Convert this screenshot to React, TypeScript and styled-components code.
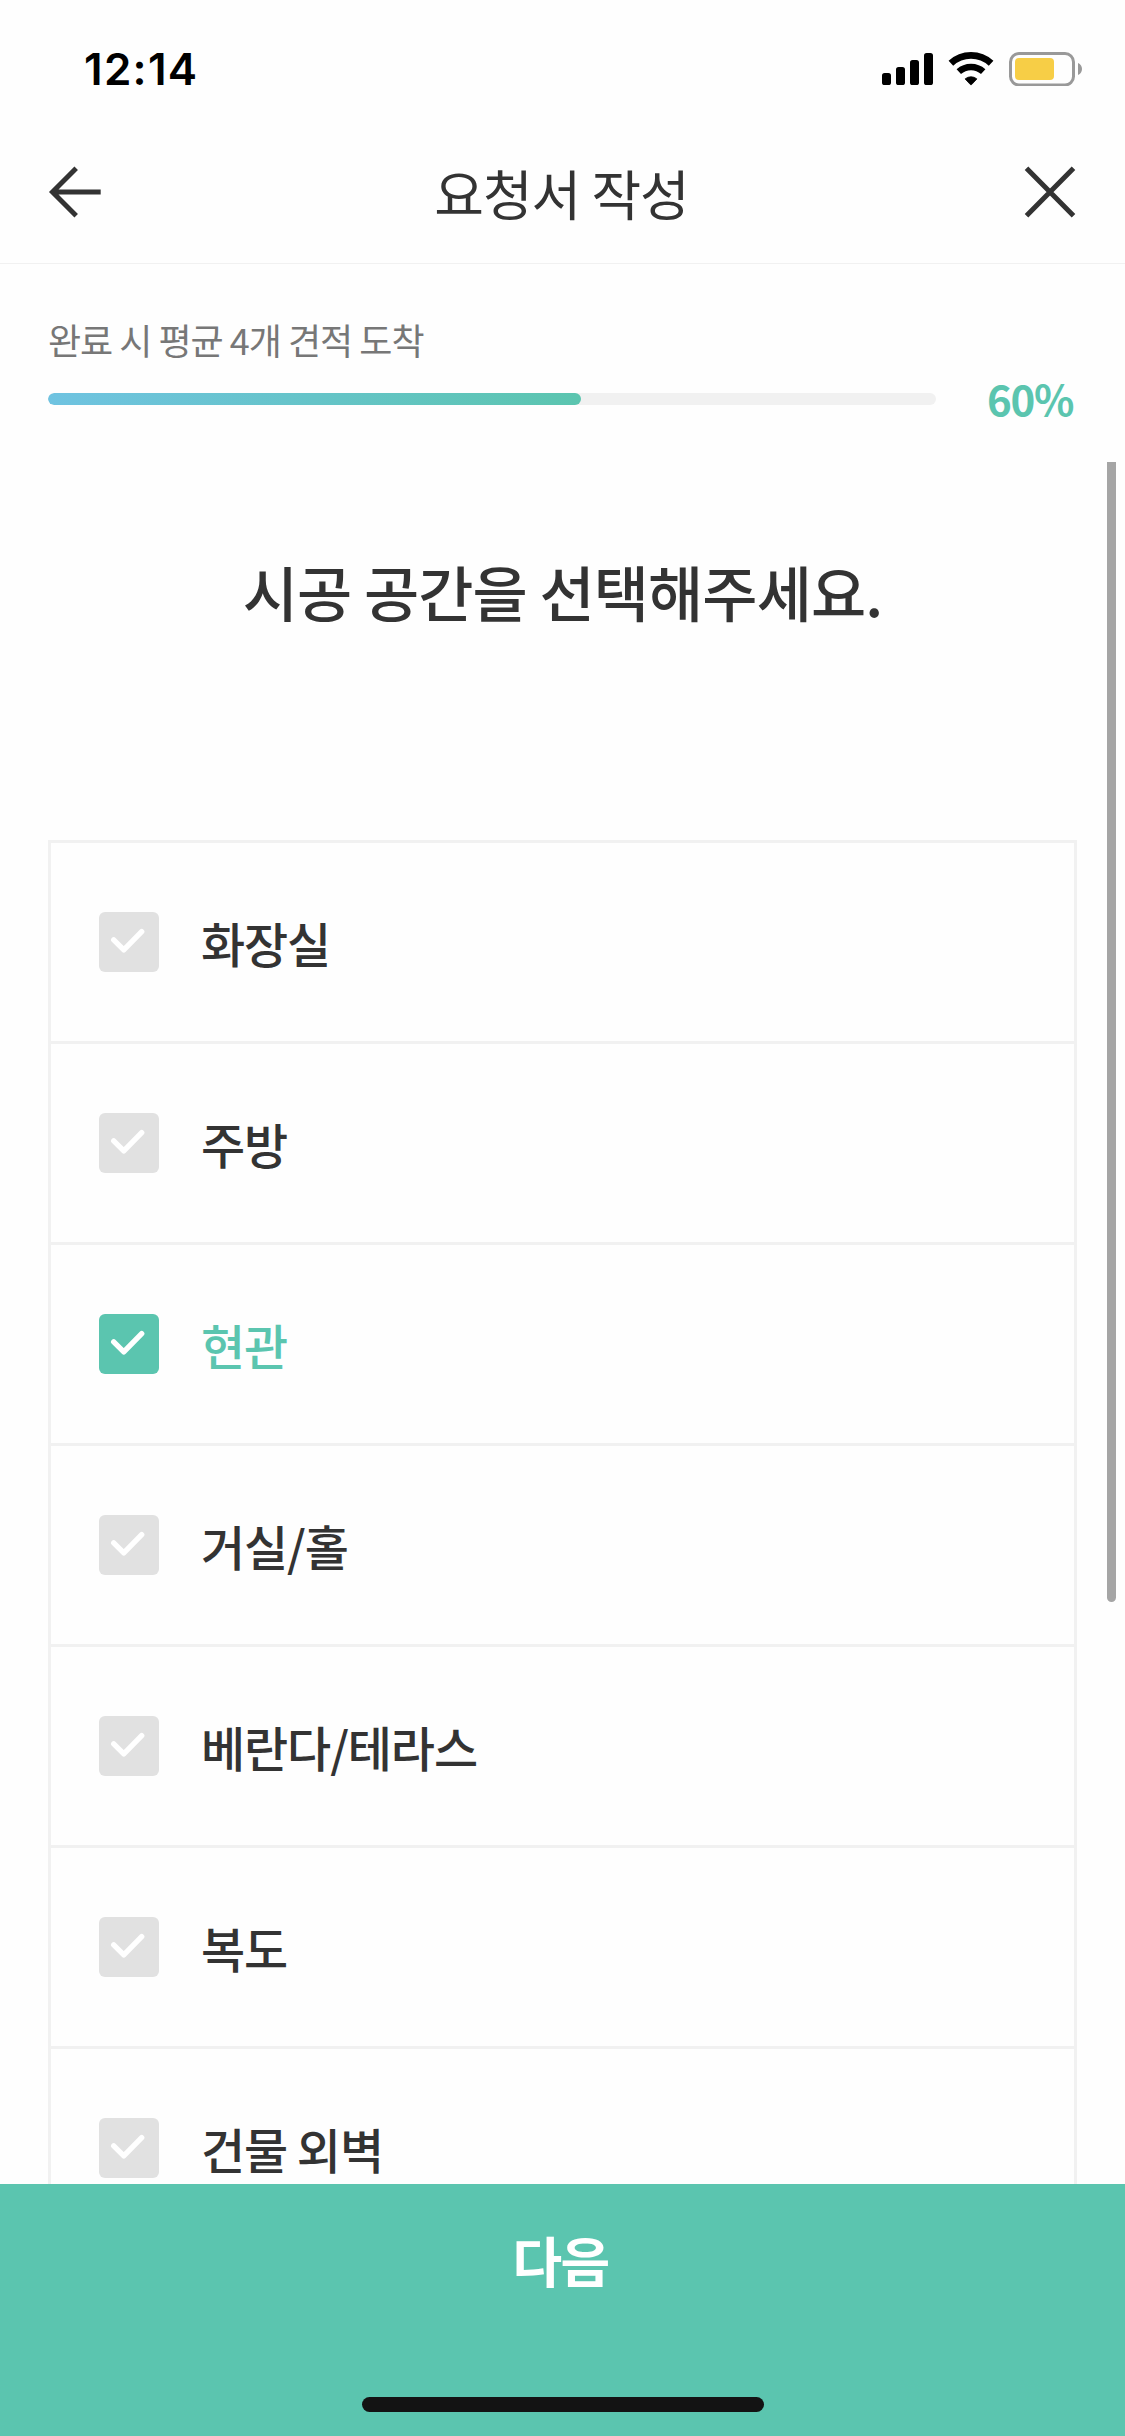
import React, { useState } from 'react';
import styled, { createGlobalStyle } from 'styled-components';

const color = {
  teal: '#5bc5af',
  sky: '#6fc3e1',
  ink: '#333333',
  muted: '#777777',
  line: '#f1f1f1',
  box: '#e1e1e1',
  surface: '#fefefe',
};

const GlobalStyle = createGlobalStyle`
  *, *::before, *::after { box-sizing: border-box; }
  body {
    margin: 0;
    background: ${color.surface};
    color: ${color.ink};
    font-family: 'Noto Sans CJK KR', 'Noto Sans', sans-serif;
  }
  button { font: inherit; color: inherit; border: 0; padding: 0; background: none; }
`;

const Screen = styled.main`
  display: flex;
  flex-direction: column;
  width: 1125px;
  height: 2436px;
  overflow: hidden;
  background: ${color.surface};
`;

const StatusBar = styled.div`
  flex: none;
  display: flex;
  justify-content: space-between;
  height: 121px;
  padding: 52px 43px 0 84px;
`;

const Clock = styled.time`
  font: 600 44px/34px Inter, sans-serif;
  letter-spacing: 1.3px;
  color: #000;
`;

const NavBar = styled.header`
  flex: none;
  display: grid;
  grid-template-columns: 54px 1fr 54px;
  align-items: center;
  height: 143px;
  padding: 0 48px;
  border-bottom: 1px solid ${color.line};
`;

const NavTitle = styled.h1`
  margin: 0;
  padding: 2px 2px 0 0;
  text-align: center;
  font-size: 54px;
  line-height: 80px;
  font-weight: 400;
  letter-spacing: -1px;
`;

const IconButton = styled.button`
  display: flex;
  width: 54px;
  height: 54px;
`;

const ProgressSection = styled.section`
  flex: none;
  height: 198px;
  padding: 49px 48px 0;
`;

const ProgressLabel = styled.p`
  margin: 0 0 4px;
  font-size: 36px;
  line-height: 52px;
  letter-spacing: -1px;
  color: ${color.muted};
`;

const ProgressRow = styled.div`
  display: flex;
  align-items: center;
  gap: 51px;
`;

const Track = styled.div`
  flex: none;
  width: 888px;
  height: 12px;
  border-radius: 6px;
  background: ${color.line};
  overflow: hidden;
`;

const Fill = styled.div`
  height: 100%;
  border-radius: 6px;
  background: linear-gradient(90deg, ${color.sky}, ${color.teal});
`;

const Percent = styled.span`
  padding-bottom: 2px;
  font-size: 42px;
  line-height: 58px;
  font-weight: 700;
  letter-spacing: -1.26px;
  color: ${color.teal};
`;

const ScrollArea = styled.section`
  position: relative;
  flex: 1;
  min-height: 0;
  padding: 84px 48px 0;
  overflow: hidden;
`;

const ScrollThumb = styled.div`
  position: absolute;
  top: 0;
  right: 9px;
  width: 9px;
  height: 1140px;
  border-radius: 0 0 4.5px 4.5px;
  background: #a5a5a5;
`;

const Question = styled.h2`
  margin: 0 0 205px;
  text-align: center;
  font-size: 60px;
  line-height: 89px;
  font-weight: 500;
  letter-spacing: -0.9px;
`;

const OptionList = styled.ul`
  margin: 0;
  padding: 0;
  list-style: none;
  border: 3px solid ${color.line};
`;

const Option = styled.li<{ $checked: boolean }>`
  display: flex;
  align-items: center;
  gap: 42px;
  height: 198px;
  padding: 0 48px;
  font-size: 48px;
  line-height: 70px;
  font-weight: 500;
  letter-spacing: -1.1px;
  color: ${(p) => (p.$checked ? color.teal : color.ink)};

  & + & {
    height: 201px;
    border-top: 3px solid ${color.line};
  }
`;

const CheckBox = styled.span<{ $checked: boolean }>`
  flex: none;
  display: flex;
  width: 60px;
  height: 60px;
  border-radius: 6px;
  background: ${(p) => (p.$checked ? color.teal : color.box)};
`;

const Footer = styled.footer`
  flex: none;
  display: flex;
  flex-direction: column;
  align-items: center;
  height: 252px;
  background: ${color.teal};
`;

const NextButton = styled.button`
  && {
    width: 100%;
    height: 150px;
    padding: 2px 4px 0 0;
    font-size: 54px;
    line-height: 80px;
    font-weight: 700;
    letter-spacing: -1.6px;
    color: #fff;
  }
`;

const HomeIndicator = styled.div`
  width: 402px;
  height: 15px;
  margin-top: 63px;
  border-radius: 7.5px;
  background: #131313;
`;

const StatusIcons = () => (
  <svg width="200" height="34" viewBox="0 0 200 34" aria-hidden="true">
    <rect x="0" y="21" width="9" height="12" rx="2.6" />
    <rect x="14" y="15" width="9" height="18" rx="2.6" />
    <rect x="28" y="8" width="9" height="25" rx="2.6" />
    <rect x="42" y="1" width="9" height="32" rx="2.6" />
    <g fill="none" stroke="#000">
      <path d="M68.9 11.3A29.6 29.6 0 0 1 109.1 11.3" strokeWidth="6.8" />
      <path d="M76.8 19.6A18.3 18.3 0 0 1 101.2 19.6" strokeWidth="6.6" />
    </g>
    <path d="M83.1 26.9A9.2 9.2 0 0 1 94.9 26.9L89.6 32.6Q89 33.1 88.4 32.6Z" stroke="#000" strokeWidth="0.8" strokeLinejoin="round" />
    <rect x="128.5" y="1.5" width="63" height="31.5" rx="8.5" fill="none" stroke="#999" strokeWidth="3" />
    <rect x="133" y="6" width="39" height="22" rx="4" fill="#f7ce46" />
    <path d="M196 11C198.7 12.2 200 14.6 200 17S198.7 21.8 196 23Z" fill="#999" />
  </svg>
);

const BackIcon = () => (
  <svg width="54" height="54" viewBox="0 0 54 54" fill="none" stroke={color.ink} strokeWidth="5">
    <path d="M28.2 3.3 4.5 27 28.2 50.7M5 27H52.7" />
  </svg>
);

const CloseIcon = () => (
  <svg width="54" height="54" viewBox="0 0 54 54" fill="none" stroke={color.ink} strokeWidth="5">
    <path d="M3.5 3.3 50.5 50.7M50.5 3.3 3.5 50.7" />
  </svg>
);

const CheckIcon = () => (
  <svg width="60" height="60" viewBox="0 0 60 60" fill="none" stroke="#fff" strokeWidth="5.4" strokeLinecap="round" strokeLinejoin="round">
    <path d="M14.7 27.8 24.8 37.8 42.7 19.6" />
  </svg>
);

const options = ['화장실', '주방', '현관', '거실/홀', '베란다/테라스', '복도', '건물 외벽'];

export default function App() {
  const [selected, setSelected] = useState<string[]>(['현관']);
  const percent = 60;

  const toggle = (name: string) =>
    setSelected((prev) => (prev.includes(name) ? prev.filter((n) => n !== name) : [...prev, name]));

  return (
    <Screen>
      <GlobalStyle />
      <StatusBar>
        <Clock>12:14</Clock>
        <StatusIcons />
      </StatusBar>
      <NavBar>
        <IconButton aria-label="뒤로">
          <BackIcon />
        </IconButton>
        <NavTitle>요청서 작성</NavTitle>
        <IconButton aria-label="닫기">
          <CloseIcon />
        </IconButton>
      </NavBar>
      <ProgressSection>
        <ProgressLabel>완료 시 평균 4개 견적 도착</ProgressLabel>
        <ProgressRow>
          <Track>
            <Fill style={{ width: `${percent}%` }} />
          </Track>
          <Percent>{percent}%</Percent>
        </ProgressRow>
      </ProgressSection>
      <ScrollArea>
        <Question>시공 공간을 선택해주세요.</Question>
        <OptionList>
          {options.map((name) => {
            const checked = selected.includes(name);
            return (
              <Option key={name} $checked={checked} onClick={() => toggle(name)}>
                <CheckBox $checked={checked}>
                  <CheckIcon />
                </CheckBox>
                {name}
              </Option>
            );
          })}
        </OptionList>
        <ScrollThumb />
      </ScrollArea>
      <Footer>
        <NextButton>다음</NextButton>
        <HomeIndicator />
      </Footer>
    </Screen>
  );
}
